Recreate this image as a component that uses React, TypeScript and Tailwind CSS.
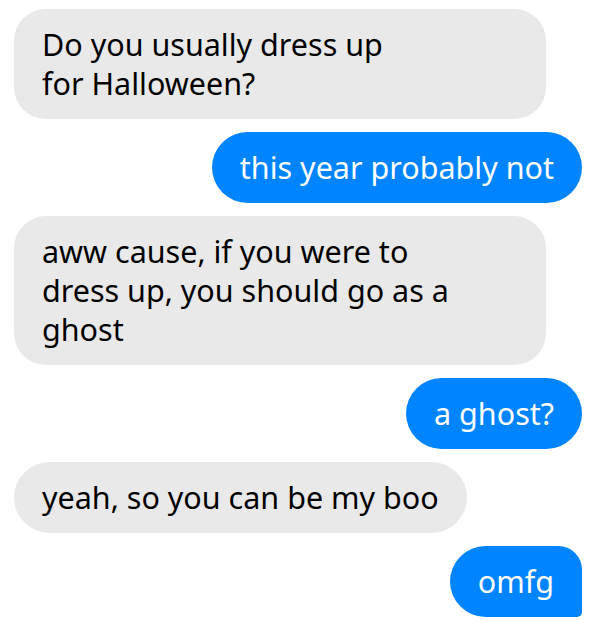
const messages = [
  { from: 'them', lines: ['Do you usually dress up', 'for Halloween?'], wide: true },
  { from: 'me', lines: ['this year probably not'] },
  { from: 'them', lines: ['aww cause, if you were to', 'dress up, you should go as a', 'ghost'], wide: true },
  { from: 'me', lines: ['a ghost?'] },
  { from: 'them', lines: ['yeah, so you can be my boo'] },
  { from: 'me', lines: ['omfg'], last: true },
]

function Bubble({ from, lines, wide, last }: { from: string; lines: string[]; wide?: boolean; last?: boolean }) {
  const mine = from === 'me'
  let shape = 'rounded-[36px]'
  if (wide) shape = 'w-[532px] rounded-[32px]'
  if (last) shape = 'rounded-tl-[36px] rounded-bl-[36px] rounded-tr-[24px] rounded-br-[5px]'
  return (
    <div className={mine ? 'flex justify-end pr-[8px]' : 'flex justify-start pl-[14px]'}>
      <div
        className={
          (mine ? 'bg-[#0084ff] text-white ' : 'bg-[#e9e9e9] text-black ') +
          shape +
          ' px-[28px] py-[16px] text-[30.5px] leading-[39px]'
        }
      >
        {lines.map((l, i) => (
          <div key={i}>{l}</div>
        ))}
      </div>
    </div>
  )
}

export default function App() {
  return (
    <div
      className="w-[590px] h-[620px] bg-white pt-[9px] flex flex-col gap-[13px] overflow-hidden"
      style={{ fontFamily: '"Noto Sans", "Open Sans", sans-serif' }}
    >
      {messages.map((m, i) => (
        <Bubble key={i} {...m} />
      ))}
    </div>
  )
}
